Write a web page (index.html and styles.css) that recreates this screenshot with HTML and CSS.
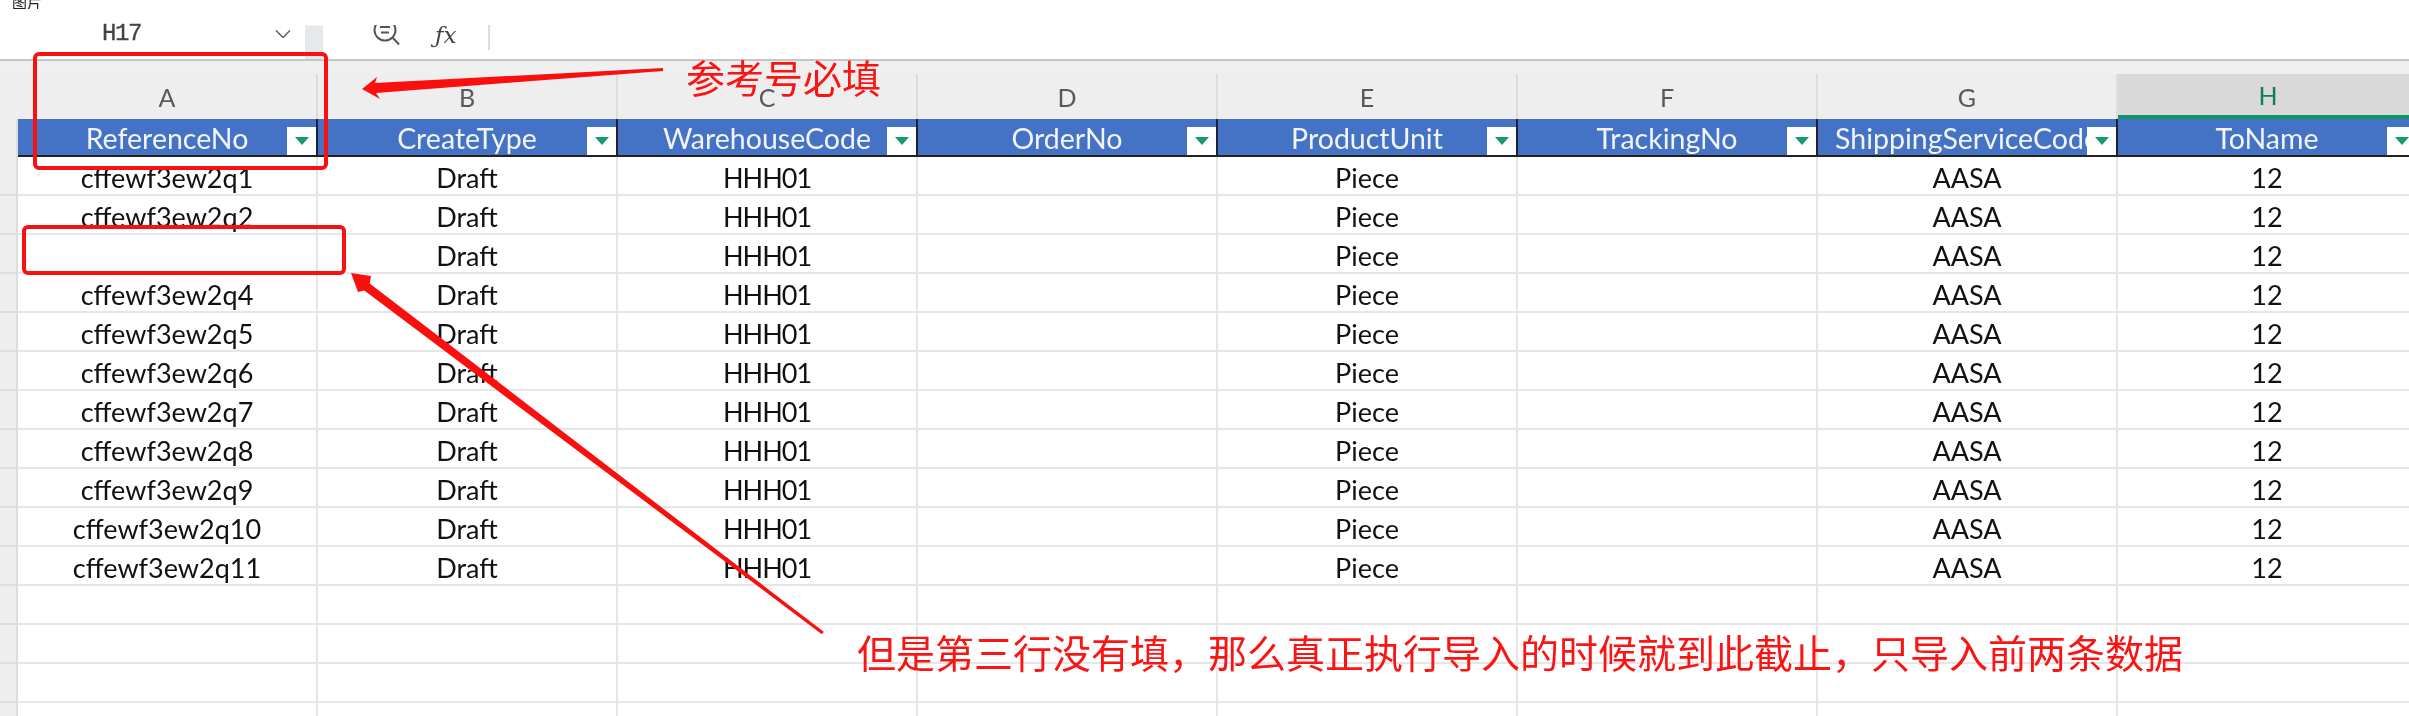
FILE: index.html
```html
<!DOCTYPE html>
<html lang="zh-CN">
<head>
<meta charset="utf-8">
<title>Excel</title>
<link rel="stylesheet" href="styles.css">
</head>
<body>
<div class="app">
  <div class="caption"><span class="caption-text">图片</span></div>
  <div class="formula-bar">
    <span class="name-box">H17</span>
    <svg class="chevron" width="16" height="8" viewBox="0 0 16 8"><path d="M1 .5 8 7.5 15 .5" fill="none" stroke="#666" stroke-width="1.6"/></svg>
    <span class="grip"></span>
    <svg class="search" width="27" height="20" viewBox="0 0 27 20"><circle cx="12" cy="5" r="10.5" fill="none" stroke="#555" stroke-width="2"/><path d="M7 2h10M8 7.5h8M20 13l6 6.500" fill="none" stroke="#555" stroke-width="2"/></svg>
    <span class="fx">ƒx</span>
    <span class="bar-divider"></span>
  </div>
  <table class="sheet">
    <colgroup><col class="col-rh"><col class="col-data" span="8"></colgroup>
    <thead>
      <tr class="strip"><th colspan="9"></th></tr>
      <tr class="letters"><th class="rh"></th><th>A</th><th>B</th><th>C</th><th>D</th><th>E</th><th>F</th><th>G</th><th class="active">H</th></tr>
      <tr class="fields">
        <th class="rh"></th>
        <th>ReferenceNo<span class="filter"></span></th>
        <th>CreateType<span class="filter"></span></th>
        <th>WarehouseCode<span class="filter"></span></th>
        <th>OrderNo<span class="filter"></span></th>
        <th>ProductUnit<span class="filter"></span></th>
        <th>TrackingNo<span class="filter"></span></th>
        <th>ShippingServiceCode<span class="filter"></span></th>
        <th>ToName<span class="filter"></span></th>
      </tr>
    </thead>
    <tbody>
      <tr><td class="rh"></td><td>cffewf3ew2q1</td><td>Draft</td><td class="code">HHH01</td><td></td><td>Piece</td><td></td><td>AASA</td><td>12</td></tr>
      <tr><td class="rh"></td><td>cffewf3ew2q2</td><td>Draft</td><td class="code">HHH01</td><td></td><td>Piece</td><td></td><td>AASA</td><td>12</td></tr>
      <tr><td class="rh"></td><td></td><td>Draft</td><td class="code">HHH01</td><td></td><td>Piece</td><td></td><td>AASA</td><td>12</td></tr>
      <tr><td class="rh"></td><td>cffewf3ew2q4</td><td>Draft</td><td class="code">HHH01</td><td></td><td>Piece</td><td></td><td>AASA</td><td>12</td></tr>
      <tr><td class="rh"></td><td>cffewf3ew2q5</td><td>Draft</td><td class="code">HHH01</td><td></td><td>Piece</td><td></td><td>AASA</td><td>12</td></tr>
      <tr><td class="rh"></td><td>cffewf3ew2q6</td><td>Draft</td><td class="code">HHH01</td><td></td><td>Piece</td><td></td><td>AASA</td><td>12</td></tr>
      <tr><td class="rh"></td><td>cffewf3ew2q7</td><td>Draft</td><td class="code">HHH01</td><td></td><td>Piece</td><td></td><td>AASA</td><td>12</td></tr>
      <tr><td class="rh"></td><td>cffewf3ew2q8</td><td>Draft</td><td class="code">HHH01</td><td></td><td>Piece</td><td></td><td>AASA</td><td>12</td></tr>
      <tr><td class="rh"></td><td>cffewf3ew2q9</td><td>Draft</td><td class="code">HHH01</td><td></td><td>Piece</td><td></td><td>AASA</td><td>12</td></tr>
      <tr><td class="rh"></td><td>cffewf3ew2q10</td><td>Draft</td><td class="code">HHH01</td><td></td><td>Piece</td><td></td><td>AASA</td><td>12</td></tr>
      <tr><td class="rh"></td><td>cffewf3ew2q11</td><td>Draft</td><td class="code">HHH01</td><td></td><td>Piece</td><td></td><td>AASA</td><td>12</td></tr>
      <tr><td class="rh"></td><td></td><td></td><td></td><td></td><td></td><td></td><td></td><td></td></tr>
      <tr><td class="rh"></td><td></td><td></td><td></td><td></td><td></td><td></td><td></td><td></td></tr>
      <tr><td class="rh"></td><td></td><td></td><td></td><td></td><td></td><td></td><td></td><td></td></tr>
      <tr><td class="rh"></td><td></td><td></td><td></td><td></td><td></td><td></td><td></td><td></td></tr>
    </tbody>
  </table>
  <svg class="marks" width="2409" height="716" viewBox="0 0 2409 716">
    <rect x="35" y="54" width="291" height="114" rx="4" fill="none" stroke="#f91010" stroke-width="4"/>
    <rect x="24" y="227" width="320" height="46" rx="4" fill="none" stroke="#f91010" stroke-width="4"/>
    <path d="M362 89 377 77 375 83 663 68 663 71 376 93 380 99Z" fill="#fa0f0f"/>
    <path d="M351 273 371 276 369.700 283.400 824 632 821.500 634 364.300 290.600 358 292Z" fill="#fa0f0f"/>
  </svg>
  <span class="note note-required">参考号必填</span>
  <span class="note note-cutoff">但是第三行没有填，那么真正执行导入的时候就到此截止，只导入前两条数据</span>
</div>
</body>
</html>
```

FILE: styles.css
```css
* { box-sizing: border-box; }
html, body { margin: 0; padding: 0; background: #fff; }
.app {
  position: relative;
  width: 2409px;
  height: 716px;
  overflow: hidden;
  filter: blur(.4px);
}
.caption {
  height: 9px;
  padding-left: 12px;
  overflow: hidden;
}
.caption-text {
  display: block;
  margin-top: -6px;
  font: 15px/15px "Noto Sans CJK SC", sans-serif;
  color: #222;
}
.formula-bar {
  display: flex;
  align-items: flex-start;
  height: 50px;
  padding: 16px 0 0 102px;
}
.name-box {
  width: 173px;
  margin-top: -1px;
  font: 24px/20px "Liberation Mono", monospace;
  letter-spacing: -1.400px;
  color: #444;
  -webkit-text-stroke: .3px #444;
}
.chevron { margin: 5px 14px 0 0; }
.grip {
  width: 18px;
  height: 34px;
  margin-right: 50px;
  background: #e6e9ec;
  border-top: 1px solid #f2f3f4;
}
.search { margin-right: 35px; }
.fx {
  width: 27px;
  margin-right: 26px;
  font: italic 23px/20px "DejaVu Serif", serif;
  color: #444;
}
.bar-divider {
  width: 2px;
  height: 25px;
  background: #ddd;
}
.sheet {
  table-layout: fixed;
  width: 2418px;
  border-collapse: separate;
  border-spacing: 0;
  border-top: 2px solid #c6c6c6;
  font-family: Lato, "Liberation Sans", sans-serif;
}
.col-rh { width: 18px; }
.col-data { width: 300px; }
.sheet th, .sheet td {
  padding: 0;
  text-align: center;
  font-weight: 400;
  overflow: hidden;
  white-space: nowrap;
}
.sheet .rh { background: #eee; border-right: 2px solid #ddd; }
.strip th { height: 13px; background: #eff0f0; }
.letters th {
  height: 45px;
  background: #eee;
  border-right: 2px solid #ddd;
  font-size: 25px;
  color: #595959;
}
.letters .rh { border-right-color: #eee; }
.letters .active {
  background: #d9d9d9;
  color: #107c62;
  border-right: 0;
  border-bottom: 4px solid #0f9467;
}
.sheet .fields th {
  position: relative;
  height: 38px;
  padding-top: 3px;
  background: #4472c4;
  border-right: 2px solid #1b2233;
  border-bottom: 2px solid #222;
  font-size: 28.500px;
  line-height: 33px;
  color: #f1f4fb;
}
.sheet .fields .rh { background: #eee; border-bottom: 0; border-right-color: #ddd; }
.filter {
  position: absolute;
  top: 8px;
  right: 0;
  bottom: 0;
  width: 29px;
  display: flex;
  align-items: center;
  justify-content: center;
  background: #fff;
}
.filter::after {
  content: "";
  border-style: solid;
  border-width: 8px 7px 0;
  border-color: #159a6a transparent transparent;
}
.sheet tbody td {
  height: 39px;
  padding-top: 4px;
  border-right: 2px solid #e6e6e6;
  border-bottom: 2px solid #e6e6e6;
  font-size: 27px;
  line-height: 33px;
  color: #111;
  background: #fff;
}
.sheet tbody .code { letter-spacing: -1px; }
.sheet tbody .rh { background: #eee; border-right-color: #ddd; border-bottom-color: #ddd; }
.marks {
  position: absolute;
  left: 0;
  top: 0;
  pointer-events: none;
}
.note {
  position: absolute;
  font: 39px/39px "Noto Sans CJK SC", sans-serif;
  color: #fb1414;
  white-space: nowrap;
}
.note-required { left: 686px; top: 57px; }
.note-cutoff { left: 857px; top: 632px; }
```
